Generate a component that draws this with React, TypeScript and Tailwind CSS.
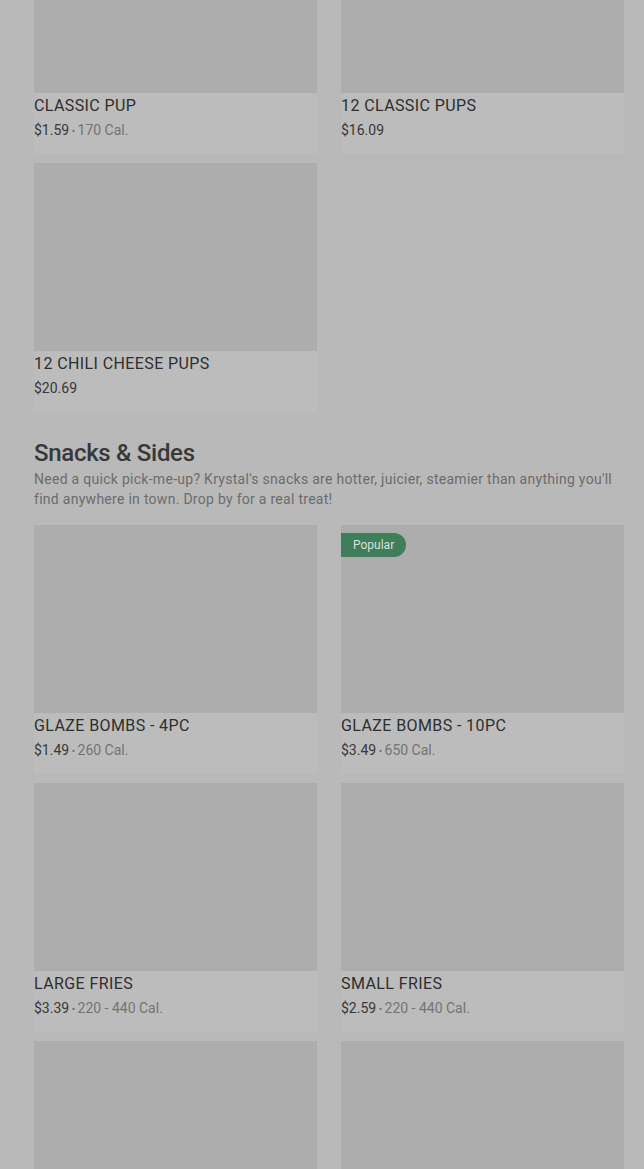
import React from "react";

type Item = { name?: string; price?: string; cal?: string; popular?: boolean };

const pups: Item[] = [
  { name: "CLASSIC PUP", price: "$1.59", cal: "170 Cal." },
  { name: "12 CLASSIC PUPS", price: "$16.09" },
  { name: "12 CHILI CHEESE PUPS", price: "$20.69" },
];

const snacks: Item[] = [
  { name: "GLAZE BOMBS - 4PC", price: "$1.49", cal: "260 Cal." },
  { name: "GLAZE BOMBS - 10PC", price: "$3.49", cal: "650 Cal.", popular: true },
  { name: "LARGE FRIES", price: "$3.39", cal: "220 - 440 Cal." },
  { name: "SMALL FRIES", price: "$2.59", cal: "220 - 440 Cal." },
  {},
  {},
];

function Card({ item }: { item: Item }) {
  return (
    <div className="relative flex flex-col bg-[#bcbcbc] pb-[14px]">
      <div className="h-[188px] w-full bg-[#adadad]" />
      {item.popular && (
        <div className="absolute left-0 top-2 flex h-6 items-center rounded-r-full bg-[#3f7d5b] pl-3 pr-3 text-[12px] text-[#d6e2da]">
          Popular
        </div>
      )}
      {item.name && (
        <>
          <div className="mt-px h-6 text-[16px] leading-6 font-normal tracking-[0.4px] text-[#2e2e2e]">{item.name}</div>
          <div className="mt-[2px] h-5 text-[14px] leading-5 text-[#383838]">
            {item.price}
            {item.cal && (
              <>
                <span className="text-[10px] leading-none text-[#6e6e6e]"> • </span>
                <span className="text-[#747474]">{item.cal}</span>
              </>
            )}
          </div>
        </>
      )}
    </div>
  );
}

export default function App() {
  return (
    <div
      className="h-[1169px] w-[644px] overflow-hidden bg-[#b9b9b9]"
      style={{ fontFamily: "Roboto, 'Noto Sans', sans-serif" }}
    >
      <div className="-mt-[95px] pl-[34px] pr-[20px]">
        <div className="grid grid-cols-2 gap-x-6 gap-y-[9px]">
          {pups.map((p, i) => (
            <Card key={i} item={p} />
          ))}
        </div>
        <div className="mt-[25px]">
          <h2 className="text-[24px] leading-8 font-medium tracking-[-0.3px] text-[#383838]">Snacks &amp; Sides</h2>
          <p className="text-[14px] leading-5 tracking-[0.28px] text-[#6c6c6c]">
            Need a quick pick-me-up? Krystal's snacks are hotter, juicier, steamier than anything you'll find anywhere in town. Drop by for a real treat!
          </p>
          <div className="mt-4 grid grid-cols-2 gap-x-6 gap-y-[9px]">
            {snacks.map((p, i) => (
              <Card key={i} item={p} />
            ))}
          </div>
        </div>
      </div>
    </div>
  );
}
